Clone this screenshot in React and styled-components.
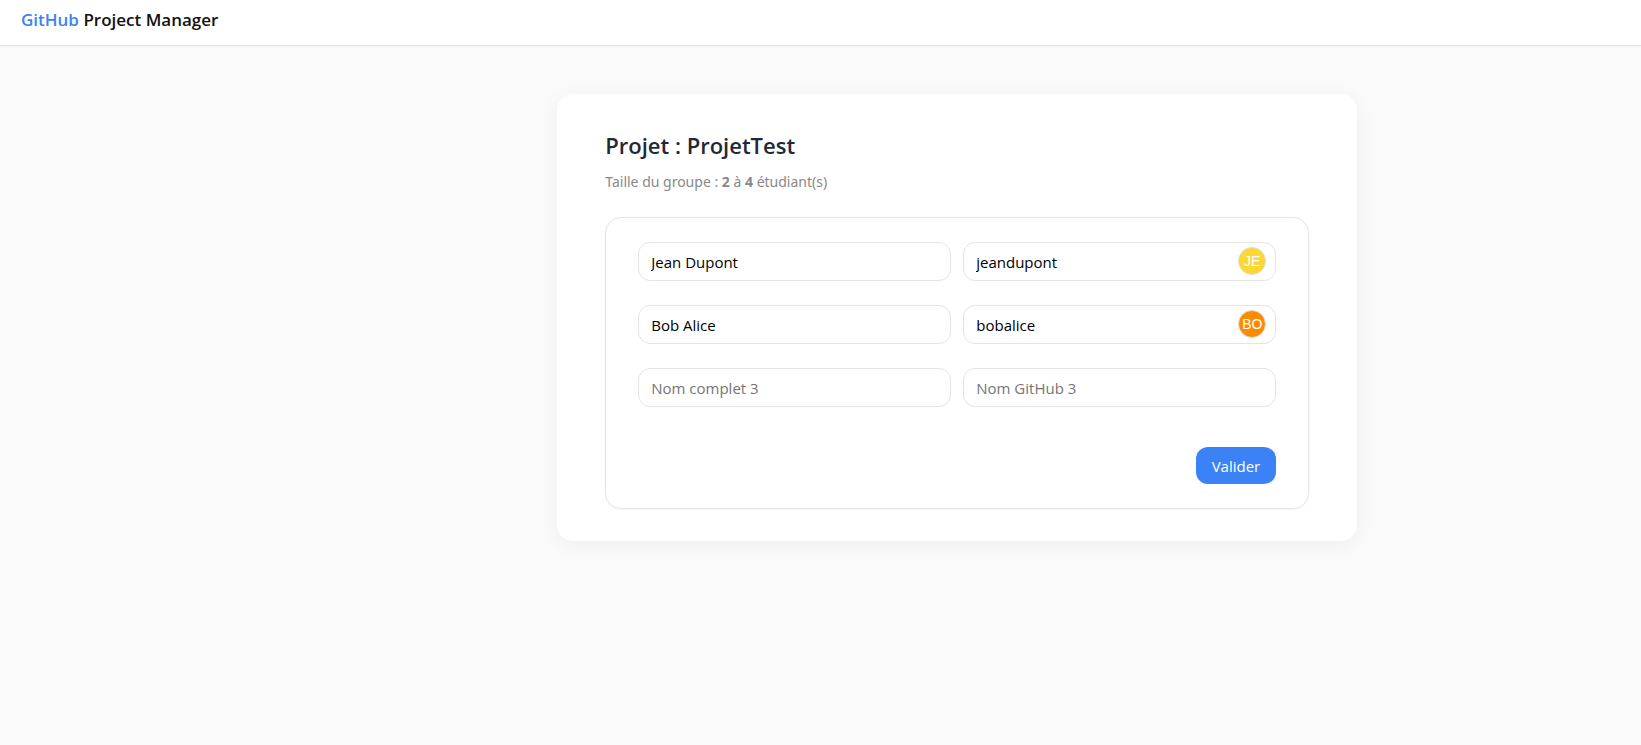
import React, { useState } from "react";
import styled, { createGlobalStyle } from "styled-components";


const GlobalStyle = createGlobalStyle`
    * {
        box-sizing: border-box;
    }
    body {
        margin: 0;
        background: #fafafa;
        color: #111111;
        font-family: "Segoe UI", "Open Sans", "Noto Sans", sans-serif;
        font-size: 15px;
    }
`;

const students = [
    { id: 1, name: "Jean Dupont", github: "jeandupont", color: "#fdd835" },
    { id: 2, name: "Bob Alice", github: "bobalice", color: "#fb8c00" },
    { id: 3, name: "", github: "", color: "" },
];


export default function App() {
    const [members, setMembers] = useState(students);

    const handleChange = (id, field, value) => {
        setMembers(members.map((m) => (m.id === id ? { ...m, [field]: value } : m)));
    };

    return (
        <>
            <GlobalStyle />
            <Header>
                <Brand><span>GitHub</span> Project Manager</Brand>
            </Header>

            <Layout>
                <Card>
                    <Title>Projet : ProjetTest</Title>
                    <GroupSize>
                        Taille du groupe : <strong>2</strong> à <strong>4</strong> étudiant(s)
                    </GroupSize>

                    <Form onSubmit={(e) => e.preventDefault()}>
                        {members.map((m) => (
                            <Row key={m.id}>
                                <Input
                                    aria-label={`Nom complet ${m.id}`}
                                    placeholder={`Nom complet ${m.id}`}
                                    value={m.name}
                                    onChange={(e) => handleChange(m.id, "name", e.target.value)}
                                />
                                <Field>
                                    <Input
                                        aria-label={`Nom GitHub ${m.id}`}
                                        placeholder={`Nom GitHub ${m.id}`}
                                        value={m.github}
                                        onChange={(e) => handleChange(m.id, "github", e.target.value)}
                                    />
                                    {m.github && (
                                        <Avatar $color={m.color}>{m.github.slice(0, 2).toUpperCase()}</Avatar>
                                    )}
                                </Field>
                            </Row>
                        ))}
                        <Actions>
                            <Button type="submit">Valider</Button>
                        </Actions>
                    </Form>
                </Card>
            </Layout>
        </>
    );
}


const Header = styled.header`
    height: 46px;
    padding: 8px 21px;
    background: #ffffff;
    border-bottom: 1px solid #e5e5e5;
    box-shadow: 0 1px 2px rgba(0, 0, 0, 0.03);
`;

const Brand = styled.div`
    font-size: 17px;
    font-weight: 600;
    line-height: 24px;

    span {
        color: #3b82f6;
    }
`;

// left column stays empty, the card is centered in the rest
const Layout = styled.main`
    display: grid;
    grid-template-columns: 1fr 5fr;
    padding: 48px 0;
`;

const Card = styled.section`
    grid-column: 2;
    justify-self: center;
    width: 100%;
    max-width: 800px;
    padding: 32px 48px;
    background: #ffffff;
    border-radius: 16px;
    box-shadow: 0 4px 20px rgba(0, 0, 0, 0.05);
`;

const Title = styled.h1`
    margin: 0 0 4px;
    color: #1f2937;
    font-size: 22px;
    font-weight: 600;
    line-height: 38px;
`;

const GroupSize = styled.p`
    margin: 0 0 22px;
    color: #888888;
    font-family: "Segoe UI", "Noto Sans", sans-serif;
    font-size: 14px;
    line-height: 27px;
`;

const Form = styled.form`
    display: flex;
    flex-direction: column;
    gap: 24px;
    padding: 24px 32px;
    border: 1px solid #e5e5e5;
    border-radius: 16px;
    box-shadow: 0 1px 2px rgba(0, 0, 0, 0.05);
`;

const Row = styled.div`
    display: grid;
    grid-template-columns: 1fr 1fr;
    gap: 12px;
`;

const Field = styled.div`
    position: relative;
`;

const Input = styled.input`
    display: block;
    width: 100%;
    height: 39px;
    padding: 0 12px;
    border: 1px solid #e5e5e5;
    border-radius: 12px;
    background: #ffffff;
    color: #000000;
    font: inherit;

    &::placeholder {
        color: #757575;
    }
    &:focus {
        outline: none;
        border-color: #3b82f6;
    }
`;

const Avatar = styled.span`
    position: absolute;
    top: 5px;
    right: 10px;
    display: flex;
    align-items: center;
    justify-content: center;
    width: 28px;
    height: 28px;
    border: 1px solid #dddddd;
    border-radius: 50%;
    background: ${(p) => p.$color};
    color: #ffffff;
    font-family: "Liberation Sans", Arial, sans-serif;
    font-size: 14px;
`;

const Actions = styled.div`
    display: flex;
    justify-content: flex-end;
    padding-top: 16px;
`;

const Button = styled.button`
    height: 37px;
    padding: 0 16px;
    border: none;
    border-radius: 12px;
    background: #3b82f6;
    color: #ffffff;
    font: inherit;
    cursor: pointer;

    &:hover {
        background: #2563eb;
    }
`;
